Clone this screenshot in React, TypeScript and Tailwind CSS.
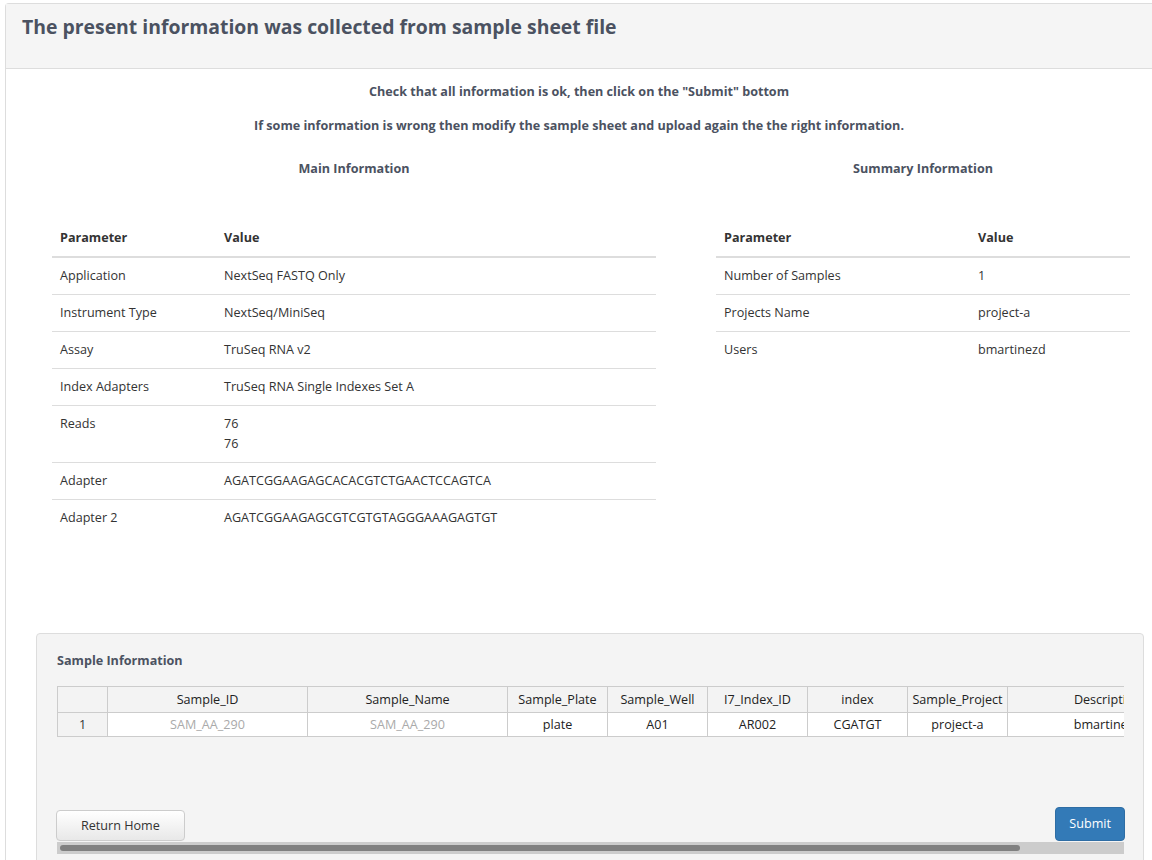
import React from "react";

const mainInfo: [string, string[]][] = [
  ["Application", ["NextSeq FASTQ Only"]],
  ["Instrument Type", ["NextSeq/MiniSeq"]],
  ["Assay", ["TruSeq RNA v2"]],
  ["Index Adapters", ["TruSeq RNA Single Indexes Set A"]],
  ["Reads", ["76", "76"]],
  ["Adapter", ["AGATCGGAAGAGCACACGTCTGAACTCCAGTCA"]],
  ["Adapter 2", ["AGATCGGAAGAGCGTCGTGTAGGGAAAGAGTGT"]],
];

const summary: [string, string][] = [
  ["Number of Samples", "1"],
  ["Projects Name", "project-a"],
  ["Users", "bmartinezd"],
];

const cols: [string, number, string, boolean][] = [
  ["Sample_ID", 200, "SAM_AA_290", true],
  ["Sample_Name", 200, "SAM_AA_290", true],
  ["Sample_Plate", 100, "plate", false],
  ["Sample_Well", 100, "A01", false],
  ["I7_Index_ID", 100, "AR002", false],
  ["index", 100, "CGATGT", false],
  ["Sample_Project", 100, "project-a", false],
  ["Description", 200, "bmartinezd", false],
];

const App = () => {
  return (
    <div
      className="h-[860px] overflow-hidden bg-white text-[12.6px] text-[#333]"
      style={{ fontFamily: '"Open Sans", "Noto Sans", sans-serif' }}
    >
      <div className="ml-[5px] mt-[3px] border border-r-0 border-[#ddd] rounded-tl">
        <div className="h-[65px] bg-[#f5f5f5] border-b border-[#ddd] px-[16px] pt-[8px]">
          <h1 className="text-[19.4px] font-bold text-[#4b5261]">
            The present information was collected from sample sheet file
          </h1>
        </div>
        <div className="text-center font-bold text-[#4b5261] pt-[14px]">
          <p>Check that all information is ok, then click on the "Submit" bottom</p>
          <p className="mt-[15px]">
            If some information is wrong then modify the sample sheet and upload again the the right information.
          </p>
        </div>
        <div className="flex pl-[46px] mt-[24px]">
          <div className="w-[604px]">
            <h3 className="text-center font-bold text-[#4b5261]">Main Information</h3>
            <table className="w-full mt-[42px] text-left">
              <thead>
                <tr className="border-b-2 border-[#ddd]">
                  <th className="px-2 py-[8px] w-[164px] font-bold">Parameter</th>
                  <th className="px-2 py-[8px] font-bold">Value</th>
                </tr>
              </thead>
              <tbody>
                {mainInfo.map(([k, v], i) => (
                  <tr key={k} className={i < mainInfo.length - 1 ? "border-b border-[#ddd]" : ""}>
                    <td className="px-2 py-[8px] align-top leading-[20px]">{k}</td>
                    <td className="px-2 py-[8px] leading-[20px]">
                      {v.map((x, j) => (
                        <div key={j}>{x}</div>
                      ))}
                    </td>
                  </tr>
                ))}
              </tbody>
            </table>
          </div>
          <div className="w-[414px] ml-[60px]">
            <h3 className="text-center font-bold text-[#4b5261]">Summary Information</h3>
            <table className="w-full mt-[42px] text-left">
              <thead>
                <tr className="border-b-2 border-[#ddd]">
                  <th className="px-2 py-[8px] w-[254px] font-bold">Parameter</th>
                  <th className="px-2 py-[8px] font-bold">Value</th>
                </tr>
              </thead>
              <tbody>
                {summary.map(([k, v], i) => (
                  <tr key={k} className={i < summary.length - 1 ? "border-b border-[#ddd]" : ""}>
                    <td className="px-2 py-[8px] leading-[20px]">{k}</td>
                    <td className="px-2 py-[8px] leading-[20px]">{v}</td>
                  </tr>
                ))}
              </tbody>
            </table>
          </div>
        </div>
        <div className="ml-[30px] mr-[8px] mt-[97px] h-[240px] bg-[#f4f4f4] border border-[#ddd] rounded px-[20px] pt-[18px]">
          <h4 className="font-bold text-[#4b5261]">Sample Information</h4>
          <div className="mt-[16px] w-[1067px] overflow-hidden">
            <table className="border-collapse table-fixed w-[1150px] text-[12.6px]">
              <thead>
                <tr className="bg-[#f3f3f3]">
                  <th className="w-[50px] h-[26px] border border-[#ccc] font-normal"></th>
                  {cols.map(([n, w]) => (
                    <th
                      key={n}
                      style={{ width: w }}
                      className="h-[26px] border border-[#ccc] font-normal text-[#222] text-center whitespace-nowrap overflow-hidden"
                    >
                      {n}
                    </th>
                  ))}
                </tr>
              </thead>
              <tbody>
                <tr>
                  <td className="h-[24px] border border-[#ccc] bg-[#f3f3f3] text-center">1</td>
                  {cols.map(([n, , v, grey]) => (
                    <td
                      key={n}
                      className={`h-[24px] border border-[#ccc] bg-white text-center whitespace-nowrap ${grey ? "text-[#aaa]" : "text-[#222]"}`}
                    >
                      {v}
                    </td>
                  ))}
                </tr>
              </tbody>
            </table>
          </div>
          <div className="flex justify-between items-end mt-[70px] w-[1068px]">
            <button className="h-[31px] px-[24px] ml-[-1px] rounded border border-[#ccc] bg-gradient-to-b from-white to-[#e8e8e8] text-[#333]">
              Return Home
            </button>
            <button className="h-[34px] px-[13px] rounded bg-[#337ab7] border border-[#2e6da4] text-white">
              Submit
            </button>
          </div>
          <div className="mt-[1px] w-[1067px] h-[12px] bg-[#ccc] p-[3px]">
            <div className="w-[960px] h-[6px] rounded-full bg-[#808080]" />
          </div>
        </div>
      </div>
    </div>
  );
};

export default App;
